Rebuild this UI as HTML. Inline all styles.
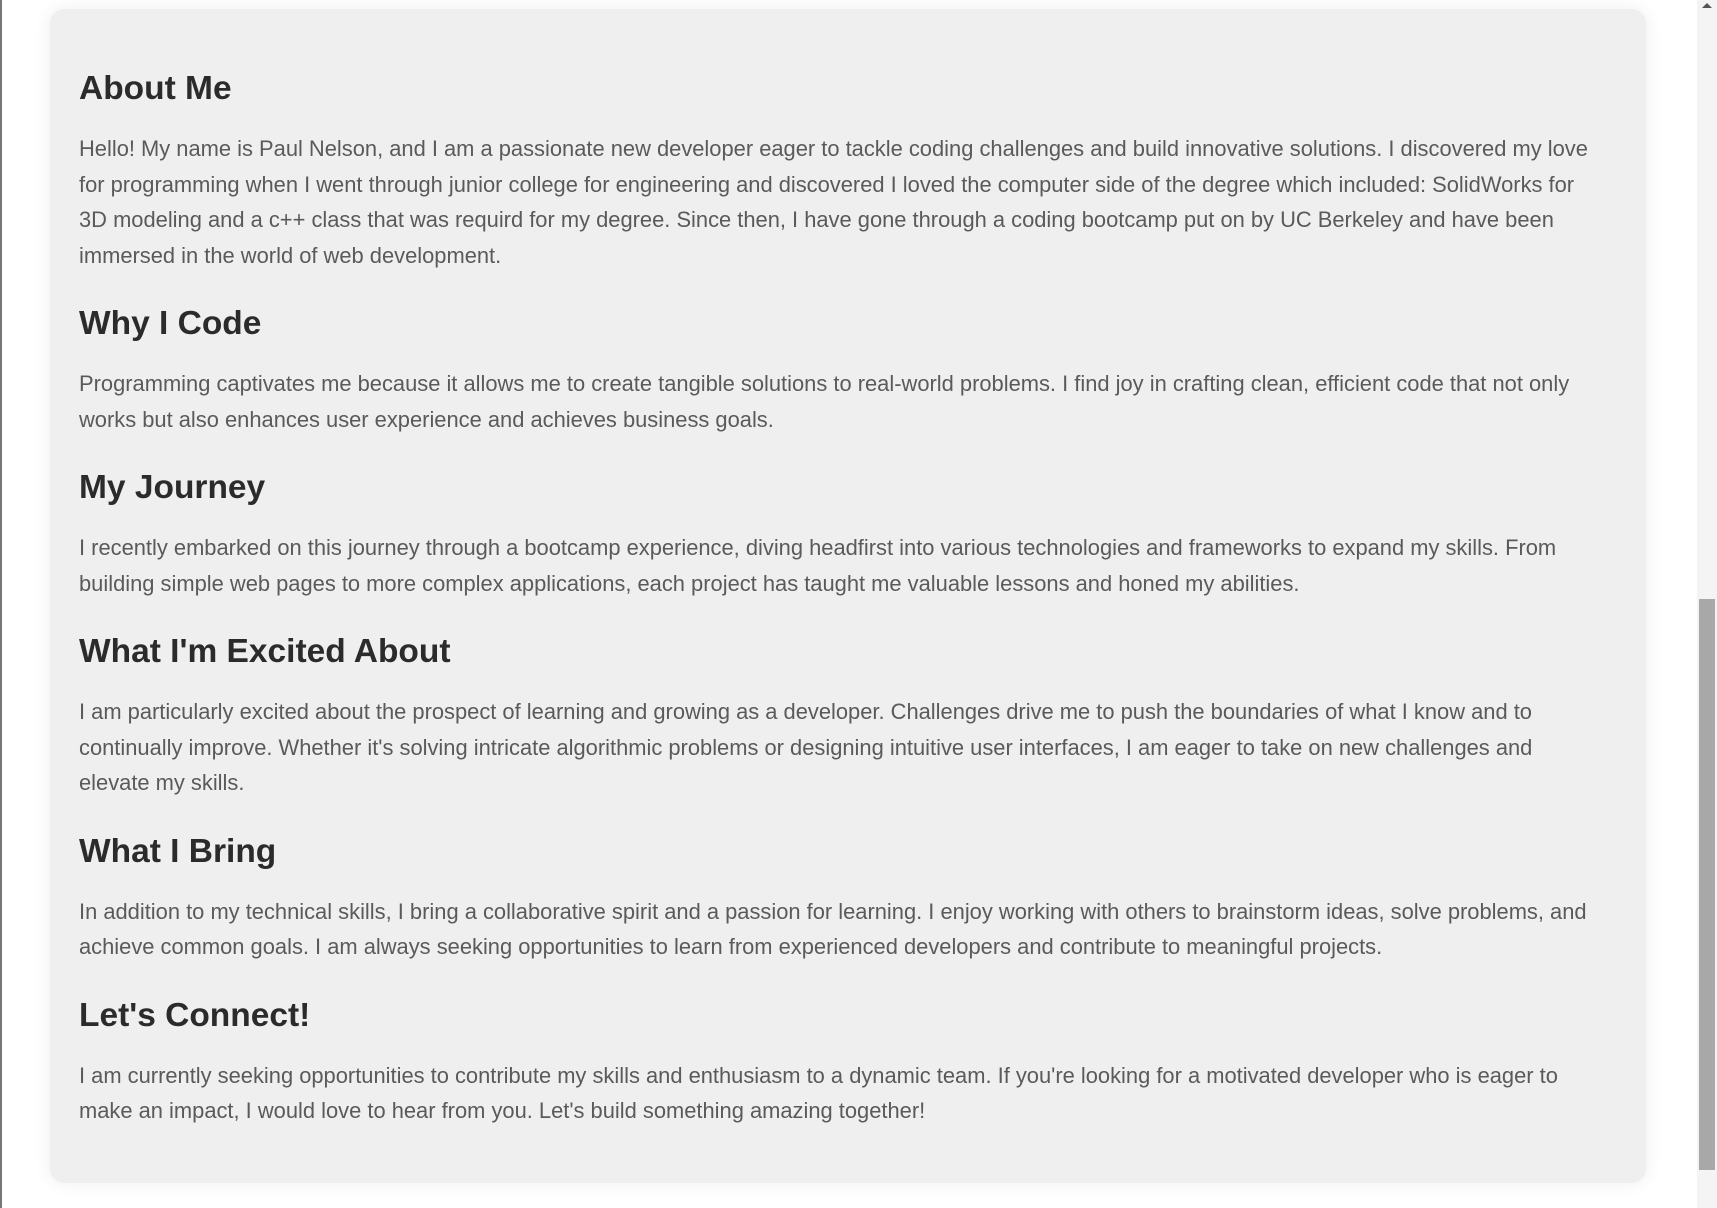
<!DOCTYPE html>
<html><head><meta charset="utf-8"><style>
html,body{margin:0;padding:0;}
body{width:1717px;height:1208px;background:#fff;position:relative;overflow:hidden;font-family:"Liberation Sans",sans-serif;}
.edge{position:absolute;left:0;top:0;width:2px;height:1208px;background:#777;}
.card{position:absolute;left:50px;top:9px;width:1596px;height:1174px;background:#efefef;border-radius:14px;box-shadow:0 0 18px rgba(0,0,0,0.07);}
.content{position:absolute;left:79px;top:69px;width:1560px;}
h2{margin:0;font-size:33.5px;line-height:40px;color:#2b2b2b;font-weight:bold;}
p{margin:22px 0 31px;font-size:21.9px;line-height:35.5px;color:#5a5a5a;white-space:nowrap;}
.sb{position:absolute;left:1697px;top:0;width:20px;height:1208px;background:#f4f4f4;}
.thumb{position:absolute;left:1699px;top:599px;width:16px;height:571px;background:#a8a8a8;}
.arr{position:absolute;left:1702px;top:3px;width:0;height:0;border-left:5px solid transparent;border-right:5px solid transparent;border-bottom:5px solid #555;}
</style></head><body>
<div class="edge"></div>
<div class="card"></div>
<div class="content">
<h2>About Me</h2>
<p>Hello! My name is Paul Nelson, and I am a passionate new developer eager to tackle coding challenges and build innovative solutions. I discovered my love<br>for programming when I went through junior college for engineering and discovered I loved the computer side of the degree which included: SolidWorks for<br>3D modeling and a c++ class that was requird for my degree. Since then, I have gone through a coding bootcamp put on by UC Berkeley and have been<br>immersed in the world of web development.</p>
<h2>Why I Code</h2>
<p>Programming captivates me because it allows me to create tangible solutions to real-world problems. I find joy in crafting clean, efficient code that not only<br>works but also enhances user experience and achieves business goals.</p>
<h2>My Journey</h2>
<p>I recently embarked on this journey through a bootcamp experience, diving headfirst into various technologies and frameworks to expand my skills. From<br>building simple web pages to more complex applications, each project has taught me valuable lessons and honed my abilities.</p>
<h2>What I'm Excited About</h2>
<p>I am particularly excited about the prospect of learning and growing as a developer. Challenges drive me to push the boundaries of what I know and to<br>continually improve. Whether it's solving intricate algorithmic problems or designing intuitive user interfaces, I am eager to take on new challenges and<br>elevate my skills.</p>
<h2>What I Bring</h2>
<p>In addition to my technical skills, I bring a collaborative spirit and a passion for learning. I enjoy working with others to brainstorm ideas, solve problems, and<br>achieve common goals. I am always seeking opportunities to learn from experienced developers and contribute to meaningful projects.</p>
<h2>Let's Connect!</h2>
<p>I am currently seeking opportunities to contribute my skills and enthusiasm to a dynamic team. If you're looking for a motivated developer who is eager to<br>make an impact, I would love to hear from you. Let's build something amazing together!</p>
</div>
<div class="sb"></div><div class="thumb"></div><div class="arr"></div>
</body></html>
